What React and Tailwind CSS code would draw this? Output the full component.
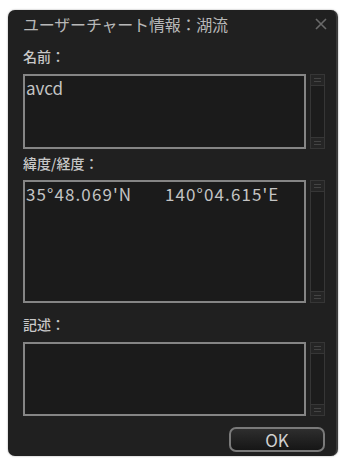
import React from "react";

const font = { fontFamily: '"Noto Sans CJK JP", "Noto Sans", sans-serif' };

function Scrollbar({ h }) {
  return (
    <div className={`w-[15px] ${h} border border-[#363636] bg-[#1c1c1c] flex flex-col justify-between`}>
      <div className="h-[11px] border-b border-[#363636] flex flex-col justify-center items-center gap-[2px] bg-[#252525]">
        <div className="w-[7px] h-px bg-[#444]" />
        <div className="w-[7px] h-px bg-[#444]" />
      </div>
      <div className="h-[11px] border-t border-[#363636] flex flex-col justify-center items-center gap-[2px] bg-[#252525]">
        <div className="w-[7px] h-px bg-[#444]" />
        <div className="w-[7px] h-px bg-[#444]" />
      </div>
    </div>
  );
}

function Box({ h, children }) {
  return (
    <div className="flex gap-[4px] items-start">
      <div className={`w-[283px] ${h} border-2 border-[#858585] bg-[#1b1b1b] pl-[1px] pt-[1px] text-[17px] leading-[22px] text-[#c4c4c4]`}>
        {children}
      </div>
      <Scrollbar h={h} />
    </div>
  );
}

export default function App() {
  return (
    <div className="w-[342px] h-[462px] bg-white pt-[10px] pl-[8px]" style={font}>
      <div className="w-[330px] h-[446px] rounded-[7px] bg-[#202020] border-r-2 border-[#3a3a3a] shadow-[0_0_2px_rgba(0,0,0,0.4)] flex flex-col pl-[15px]">
        <div className="h-[26px] flex items-center justify-between pr-[8px]">
          <span className="text-[16px] leading-[20px] text-[#b8b8b8] tracking-[-0.2px] mt-[2px]">ユーザーチャート情報：湖流</span>
          <svg width="14" height="14" viewBox="0 0 14 14" className="mt-[2px]">
            <path d="M2 2 L12 12 M12 2 L2 12" stroke="#6a6a6a" strokeWidth="1.6" />
          </svg>
        </div>
        <div className="mt-[10px] h-[20px] flex items-center text-[14px] text-[#c8c8c8] font-medium">名前：</div>
        <div className="mt-[8px]">
          <Box h="h-[75px]">avcd</Box>
        </div>
        <div className="mt-[4px] h-[20px] flex items-center text-[14px] text-[#c8c8c8] font-medium">緯度/経度：</div>
        <div className="mt-[7px]">
          <Box h="h-[123px]">
            <div className="flex tracking-[1.1px]">
              <span className="w-[139px]">35°48.069'N</span>
              <span>140°04.615'E</span>
            </div>
          </Box>
        </div>
        <div className="mt-[11px] h-[20px] flex items-center text-[14px] text-[#c8c8c8] font-medium">記述：</div>
        <div className="mt-[8px]">
          <Box h="h-[74px]"></Box>
        </div>
        <div className="mt-[11px] flex justify-end pr-[11px]">
          <div className="w-[96px] h-[25px] rounded-[7px] border-2 border-[#7a7a7a] bg-gradient-to-b from-[#2e2e2e] to-[#161616] flex items-center justify-center text-[17px] leading-[20px] text-[#d0d0d0]">
            OK
          </div>
        </div>
      </div>
    </div>
  );
}
